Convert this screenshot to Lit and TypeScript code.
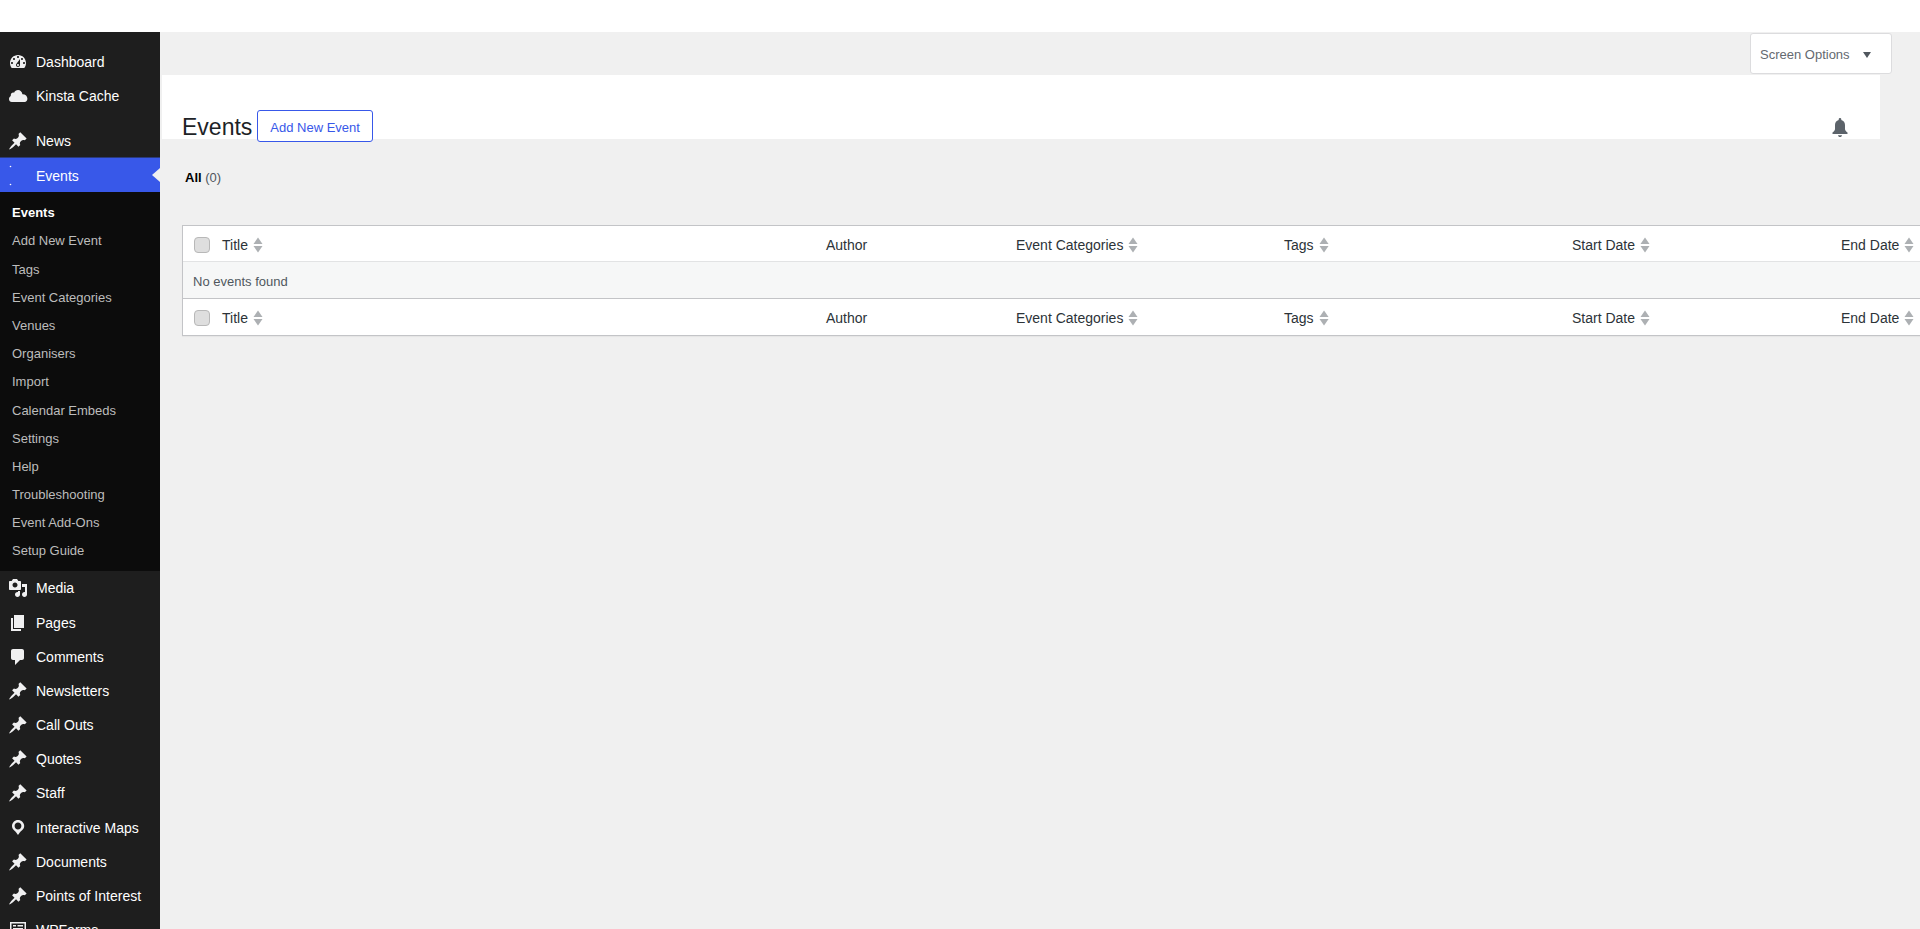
import { LitElement, html, css, svg } from "lit";
import { customElement } from "lit/decorators.js";

const ICONS: Record<string, any> = {
  dashboard: svg`<path d="M3.76 16h12.48c1.1-1.37 1.76-3.11 1.76-5 0-4.42-3.58-8-8-8s-8 3.58-8 8c0 1.89.66 3.63 1.76 5zM10 4c.55 0 1 .45 1 1s-.45 1-1 1-1-.45-1-1 .45-1 1-1zM6 6c.55 0 1 .45 1 1s-.45 1-1 1-1-.45-1-1 .45-1 1-1zm8 0c.55 0 1 .45 1 1s-.45 1-1 1-1-.45-1-1 .45-1 1-1zm-5.37 5.55L12 7v6c0 1.1-.9 2-2 2s-2-.9-2-2c0-.57.24-1.08.63-1.45zM4 10c.55 0 1 .45 1 1s-.45 1-1 1-1-.45-1-1 .45-1 1-1zm12 0c.55 0 1 .45 1 1s-.45 1-1 1-1-.45-1-1 .45-1 1-1zm-5 3c0-.55-.45-1-1-1s-1 .45-1 1 .45 1 1 1 1-.45 1-1z"/>`,
  cloud: svg`<path d="M14.600 8.200C14.200 5.800 12.200 4 9.800 4 7.900 4 6.300 5.100 5.500 6.700 5.200 6.600 4.900 6.600 4.600 6.600 3 6.600 1.900 7.900 1.900 9.400c0 .2 0 .4.1.6C.9 10.500 0 11.600 0 13c0 1.700 1.300 3 3 3h14c1.700 0 3-1.400 3-3.200 0-2.500-2-4.600-5.400-4.600z" transform="translate(1 0) scale(.92 1)"/>`,
  pin: svg`<path d="M10.44 3.02l1.82-1.82 6.36 6.35-1.83 1.82c-1.05-.68-2.48-.57-3.41.36l-.75.75c-.92.93-1.04 2.35-.35 3.41l-1.83 1.82-2.41-2.41-2.8 2.79c-.42.42-3.38 2.71-3.8 2.29s1.86-3.39 2.28-3.81l2.79-2.79L4.1 9.36l1.83-1.82c1.05.69 2.48.57 3.4-.36l.75-.75c.93-.92 1.05-2.35.36-3.41z"/>`,
  media: svg`<path d="M13 11V4c0-.55-.45-1-1-1h-1.67L9 1H5L3.67 3H2c-.55 0-1 .45-1 1v7c0 .55.45 1 1 1h10c.55 0 1-.45 1-1zM7 4.500c1.380 0 2.500 1.120 2.500 2.500S8.380 9.500 7 9.500 4.500 8.380 4.500 7 5.620 4.500 7 4.500zM14 6h5v10.500c0 1.380-1.120 2.500-2.500 2.500S14 17.880 14 16.500s1.120-2.500 2.500-2.500c.17 0 .34.02.5.05V9h-3V6zm-4 8.050V13h2v3.500c0 1.380-1.120 2.500-2.500 2.500S7 17.880 7 16.500 8.120 14 9.500 14c.17 0 .34.02.5.05z"/>`,
  page: svg`<path d="M6 15V2h10v13H6zm-1 1h8v2H3V5h2v11z"/>`,
  comment: svg`<path d="M5 2h9c1.100 0 2 .9 2 2v7c0 1.100-.9 2-2 2h-2l-5 5v-5H5c-1.100 0-2-.9-2-2V4c0-1.100.9-2 2-2z"/>`,
  location: svg`<path fill-rule="evenodd" d="M10 2C6.700 2 4 4.700 4 8c0 2 1.200 3.600 2.500 4.800.5.4 1.200 1 1.900 1.900.7.9 1.600 2.300 1.600 2.300s.9-1.400 1.600-2.300c.7-.9 1.400-1.500 1.900-1.900C15 11.600 16.200 10 16.200 8 16.200 4.700 13.300 2 10 2zm0 2.600c1.900 0 3.400 1.500 3.400 3.400s-1.500 3.400-3.400 3.400S6.600 9.900 6.600 8 8.100 4.600 10 4.600z"/>`,
  forms: svg`<path fill-rule="evenodd" d="M2 2h16v16H2V2zm1.500 1.500v13h13v-13h-13zM5 5h3v1.500H5V5zm4.500 0H15v1.500H9.500V5zM5 8h10v1H5V8zm0 2.500h3V12H5v-1.500zm4.500 0H15V12H9.500v-1.500z"/>`,
};

const icon = (name: string) => html`<svg class="ico" viewBox="0 0 20 20" fill="currentColor">${ICONS[name]}</svg>`;

const sortArrows = html`<svg class="sort" viewBox="0 0 10 16"><path d="M5 0.500 9.500 7H.5z"/><path d="M.5 9h9L5 15.500z"/></svg>`;

const TOP = [
  ["Dashboard", "dashboard"],
  ["Kinsta Cache", "cloud"],
];
const SUB = ["Events", "Add New Event", "Tags", "Event Categories", "Venues", "Organisers", "Import", "Calendar Embeds", "Settings", "Help", "Troubleshooting", "Event Add-Ons", "Setup Guide"];
const BOTTOM = [
  ["Media", "media"],
  ["Pages", "page"],
  ["Comments", "comment"],
  ["Newsletters", "pin"],
  ["Call Outs", "pin"],
  ["Quotes", "pin"],
  ["Staff", "pin"],
  ["Interactive Maps", "location"],
  ["Documents", "pin"],
  ["Points of Interest", "pin"],
  ["WPForms", "forms"],
];
const COLS: [string, boolean][] = [
  ["Title", true],
  ["Author", false],
  ["Event Categories", true],
  ["Tags", true],
  ["Start Date", true],
  ["End Date", true],
];

@customElement("app-root")
export class AppRoot extends LitElement {
  static styles = css`
    :host {
      display: flex;
      flex-direction: column;
      height: 100vh;
      overflow: hidden;
      font-family: "Liberation Sans", Arial, sans-serif;
      background: #f0f0f0;
      color: #2c3338;
    }
    .topbar { height: 32px; flex: none; background: #fff; }
    .body { flex: 1; display: flex; min-height: 0; }
    .side {
      width: 160px;
      flex: none;
      background: #1e1e1e;
      padding-top: 13px;
      overflow: hidden;
      color: #fff;
      font-size: 14px;
    }
    .item {
      height: 34.2px;
      display: flex;
      align-items: center;
      padding-left: 8px;
      gap: 8px;
      box-sizing: border-box;
    }
    .ico { width: 20px; height: 20px; flex: none; color: #f0f0f1; }
    .sep { height: 10.4px; }
    .active {
      position: relative;
      height: 33.6px;
      background: #3858e9;
      box-shadow: 0 -1px 0 #2a3a7c;
      gap: 0;
      padding: 2px 0 0 36px;
    }
    .active::after {
      content: "";
      position: absolute;
      right: 0;
      top: 10px;
      border: 7px solid transparent;
      border-left: 0;
      border-right: 8px solid #f0f0f0;
    }
    .dots { position: absolute; left: 9px; top: 7px; width: 3px; height: 21px; }
    .sub {
      background: #0c0c0c;
      padding: 7.7px 0 4.9px;
      font-size: 13px;
      margin-bottom: 0.7px;
    }
    .sub div {
      height: 28.2px;
      line-height: 28.2px;
      padding-left: 12px;
      color: #bdbdbd;
    }
    .sub .cur { color: #fff; font-weight: 700; }
    .main { flex: 1; min-width: 0; overflow: hidden; }
    .screen-row {
      height: 43px;
      display: flex;
      justify-content: flex-end;
      align-items: flex-start;
      padding: 1px 28px 0 0;
      box-sizing: border-box;
    }
    .screen {
      width: 142px;
      height: 41px;
      box-sizing: border-box;
      background: #fff;
      border: 1px solid #dcdcde;
      border-radius: 3px;
      display: flex;
      align-items: center;
      padding: 2px 0 0 9px;
      gap: 13px;
      font-size: 13px;
      color: #646970;
    }
    .caret { width: 8px; height: 6px; flex: none; }
    .panel {
      height: 64px;
      box-sizing: border-box;
      margin: 0 40px 0 2px;
      background: #fff;
      padding: 35px 30px 0 20px;
      display: flex;
      align-items: flex-start;
    }
    h1 {
      margin: 0;
      font-size: 23px;
      font-weight: 400;
      line-height: 34px;
      color: #1d2327;
    }
    .add {
      margin-left: 5px;
      height: 32px;
      box-sizing: border-box;
      padding: 2px 12px 0;
      display: flex;
      align-items: center;
      font-size: 13px;
      color: #3858e9;
      background: #fff;
      border: 1px solid #3858e9;
      border-radius: 3px;
    }
    .bell { margin-left: auto; width: 20px; height: 22px; color: #5c636a; margin-top: 7px; flex: none; }
    .tabs {
      margin: 30px 0 0 25px;
      height: 18px;
      line-height: 18px;
      font-size: 13px;
      color: #50575e;
    }
    .tabs b { color: #000; }
    .wrap { margin: 38px 0 0 22px; width: 1790px; }
    table {
      width: 100%;
      table-layout: fixed;
      border-collapse: separate;
      border-spacing: 0;
      background: #fff;
      border: 1px solid #c3c4c7;
      box-shadow: 0 1px 1px rgba(0, 0, 0, 0.04);
      font-size: 14px;
    }
    th {
      font-weight: 400;
      text-align: left;
      height: 36px;
      box-sizing: border-box;
      padding: 2px 0 0 10px;
      color: #2c3338;
    }
    thead th { border-bottom: 1px solid #e2e3e4; }
    tfoot th { border-top: 1px solid #c3c4c7; height: 37px; }
    th.cb { padding: 2px 0 0 11px; }
    .th { display: flex; align-items: center; gap: 5px; }
    .sort { width: 10px; height: 16px; flex: none; fill: #adb0b3; }
    .box {
      width: 16px;
      height: 16px;
      border: 1px solid #b8b8b8;
      background: #dedede;
      border-radius: 4px;
      box-sizing: border-box;
    }
    td {
      height: 36px;
      box-sizing: border-box;
      padding: 2px 10px 0;
      background: #f6f7f7;
      font-size: 13px;
      color: #50575e;
    }
    .c0 { width: 29px; }
    .c1 { width: 604px; }
    .c2 { width: 190px; }
    .c3 { width: 268px; }
    .c4 { width: 288px; }
    .c5 { width: 269px; }
  `;

  private head() {
    return html`<tr>
      <th class="cb"><div class="box"></div></th>
      ${COLS.map(([t, s]) => html`<th><div class="th">${t}${s ? sortArrows : ""}</div></th>`)}
    </tr>`;
  }

  render() {
    return html`
      <div class="topbar"></div>
      <div class="body">
        <nav class="side">
          ${TOP.map(([t, i]) => html`<div class="item">${icon(i)}<span>${t}</span></div>`)}
          <div class="sep"></div>
          <div class="item">${icon("pin")}<span>News</span></div>
          <div class="item active">
            <svg class="dots" viewBox="0 0 3 21" fill="#fff"><circle cx="1.500" cy="1.500" r="0.800"/><circle cx="1.500" cy="19.500" r="0.800"/></svg>
            <span>Events</span>
          </div>
          <div class="sub">
            ${SUB.map((t, i) => html`<div class=${i === 0 ? "cur" : ""}>${t}</div>`)}
          </div>
          ${BOTTOM.map(([t, i]) => html`<div class="item">${icon(i)}<span>${t}</span></div>`)}
        </nav>
        <main class="main">
          <div class="screen-row">
            <div class="screen">
              <span>Screen Options</span>
              <svg class="caret" viewBox="0 0 8 6" fill="#50575e"><path d="M0 0h8L4 6z"/></svg>
            </div>
          </div>
          <div class="panel">
            <h1>Events</h1>
            <div class="add">Add New Event</div>
            <svg class="bell" viewBox="0 0 20 22" fill="currentColor"><path d="M10 1c.8 0 1.300.6 1.300 1.300v.6C13.600 3.500 15 5.500 15 8v4c0 1.300 1 2.500 2.500 3.500V17h-15v-1.500C4 14.500 5 13.300 5 12V8c0-2.500 1.400-4.500 3.700-5.100v-.6C8.700 1.600 9.200 1 10 1z"/><path d="M8 18.200h4c0 1-1 1.800-2 1.800s-2-.8-2-1.800z"/></svg>
          </div>
          <div class="tabs"><b>All</b> (0)</div>
          <div class="wrap">
            <table>
              <colgroup>
                <col class="c0" /><col class="c1" /><col class="c2" /><col class="c3" /><col class="c4" /><col class="c5" /><col />
              </colgroup>
              <thead>${this.head()}</thead>
              <tbody><tr><td colspan="7">No events found</td></tr></tbody>
              <tfoot>${this.head()}</tfoot>
            </table>
          </div>
        </main>
      </div>
    `;
  }
}
